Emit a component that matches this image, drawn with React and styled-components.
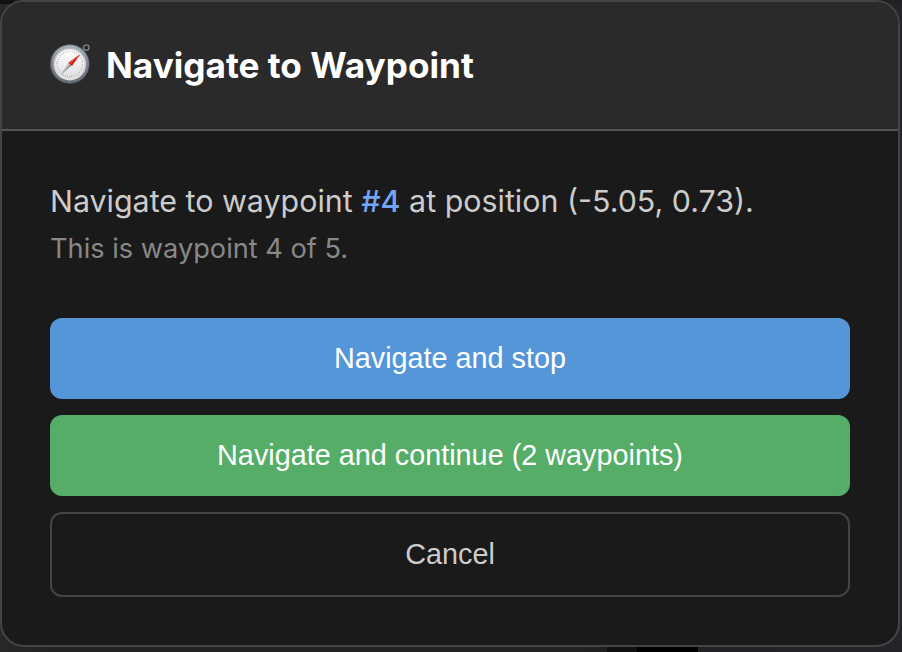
import React from "react";
import styled, { createGlobalStyle } from "styled-components";

const GlobalStyle = createGlobalStyle`
  * {
    box-sizing: border-box;
  }

  body {
    margin: 0;
    background: #222;
    overflow: hidden;
    font-family: Inter, sans-serif;
  }
`;

const Backdrop = styled.div`
  height: 652px;
  padding-right: 2px;
  background:
    linear-gradient(90deg, transparent 607px, #111 607px, #111 637px, #000 637px, #000 698px, transparent 698px)
      0 647px / 100% 5px no-repeat,
    linear-gradient(90deg, #111 0, #111 14px, #222 15px, #212124 100%) 0 0 / 100% 4px no-repeat,
    linear-gradient(90deg, #282828 0, #222 60px, #212121 600px, #212225 710px, #252529 100%);
`;

const Dialog = styled.div`
  height: 647px;
  border: 2px solid #444;
  border-radius: 24px;
  background: #1a1a1a;
  overflow: hidden;
`;

const Header = styled.div`
  display: flex;
  align-items: center;
  gap: 16px;
  height: 129px;
  padding: 0 48px 4px;
  background: #2a2a2a;
  border-bottom: 2px solid #555;
`;

const Title = styled.h3`
  margin: 2px 0 0;
  font-size: 35.2px;
  font-weight: 700;
  color: #fff;
`;

const Body = styled.div`
  padding: 46px 48px 48px;
`;

const Message = styled.p`
  margin: 0;
  font-size: 30.4px;
  line-height: 48px;
  color: #ccc;
`;

const WaypointNumber = styled.strong`
  color: #74a4f7;
  font-weight: 500;
`;

const Note = styled.p`
  margin: 0;
  font-size: 27.2px;
  line-height: 47px;
  color: #888;
`;

const Actions = styled.div`
  display: flex;
  flex-direction: column;
  gap: 16px;
  margin-top: 46px;
`;

const Button = styled.button`
  height: ${({ $outlined }) => ($outlined ? "85px" : "81px")};
  border: ${({ $outlined }) => ($outlined ? "2px solid #444" : "none")};
  border-radius: 12px;
  background: ${({ $color }) => $color || "transparent"};
  color: ${({ $outlined }) => ($outlined ? "#ccc" : "#fff")};
  font-family: "Liberation Sans", Arial, sans-serif;
  font-size: 28.8px;
`;

const CompassIcon = () => (
  <svg width="40" height="42" viewBox="0 0 40 42">
    <defs>
      <linearGradient id="rim" x1="0" y1="0" x2="0" y2="1">
        <stop offset="0" stopColor="#a9b1ba" />
        <stop offset="0.5" stopColor="#7b828d" />
        <stop offset="1" stopColor="#696e76" />
      </linearGradient>
      <linearGradient id="bezel" x1="0" y1="0" x2="0" y2="1">
        <stop offset="0" stopColor="#b5b7b9" />
        <stop offset="1" stopColor="#e4e4e3" />
      </linearGradient>
      <linearGradient id="face" x1="0" y1="0" x2="0" y2="1">
        <stop offset="0" stopColor="#fff" />
        <stop offset="1" stopColor="#dedede" />
      </linearGradient>
    </defs>
    <circle cx="36.3" cy="4.6" r="2.8" fill="none" stroke="#7e838c" strokeWidth="1.3" />
    <circle cx="19.8" cy="21" r="19.3" fill="url(#rim)" stroke="#60666f" strokeWidth="0.7" />
    <circle cx="19.8" cy="21" r="16.4" fill="url(#bezel)" />
    <circle cx="19.8" cy="21" r="14.7" fill="url(#face)" />
    <circle
      cx="19.8"
      cy="21"
      r="12.7"
      fill="none"
      stroke="#aaa"
      strokeWidth="2"
      strokeDasharray="0.6 1.6"
    />
    <path d="M11.2 31.2L19 19.5L22.2 22Z" fill="#8d8d8d" />
    <path d="M11.2 31.2L19 19.5L20.6 20.8Z" fill="#c5c5c5" />
    <path d="M30.2 11.3L18.4 19.7L22 23Z" fill="#c91f1b" />
    <path d="M30.2 11.3L18.4 19.7L20.2 21.3Z" fill="#f04439" />
  </svg>
);

const App = () => {
  return (
    <Backdrop>
      <GlobalStyle />
      <Dialog>
        <Header>
          <CompassIcon />
          <Title>Navigate to Waypoint</Title>
        </Header>
        <Body>
          <Message>
            Navigate to waypoint <WaypointNumber>#4</WaypointNumber> at position (-5.05, 0.73).
          </Message>
          <Note>This is waypoint 4 of 5.</Note>
          <Actions>
            <Button $color="#5596d9">Navigate and stop</Button>
            <Button $color="#56ad68">Navigate and continue (2 waypoints)</Button>
            <Button $outlined>Cancel</Button>
          </Actions>
        </Body>
      </Dialog>
    </Backdrop>
  );
};

export default App;
